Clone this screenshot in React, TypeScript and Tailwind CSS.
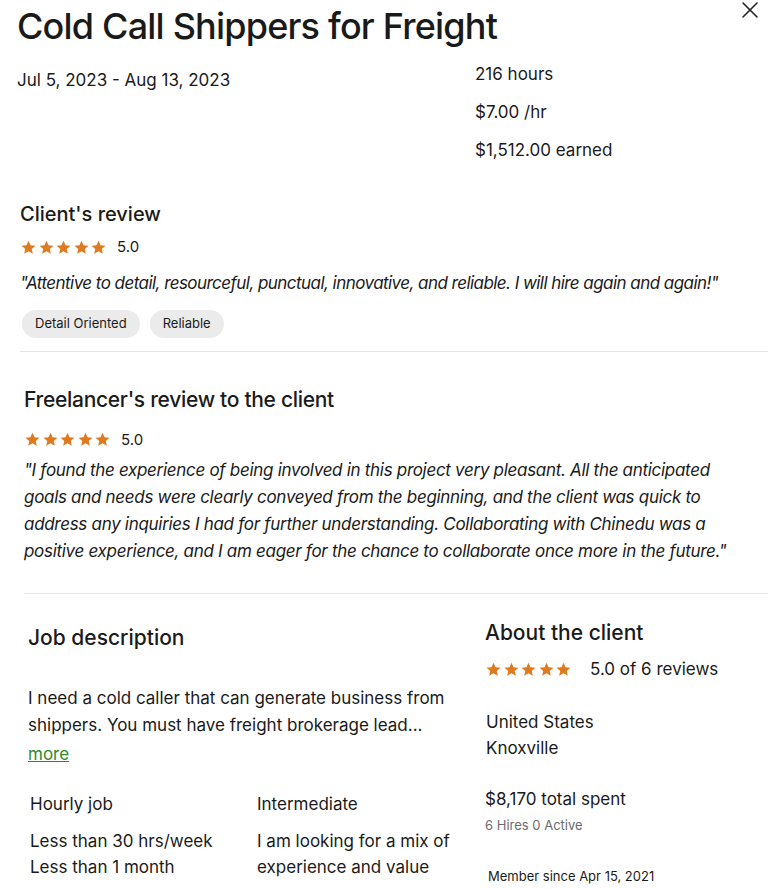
import { X } from "lucide-react";

const font = { fontFamily: "Inter, 'Liberation Sans', sans-serif" };

function Stars({ size = 17 }: { size?: number }) {
  return (
    <div className="flex items-center gap-[0.5px]">
      {[0, 1, 2, 3, 4].map((i) => (
        <svg key={i} width={size} height={size} viewBox="0 0 24 24">
          <path
            d="M12 2.5l2.9 6.3 6.9.7-5.2 4.6 1.5 6.8L12 17.4l-6.1 3.5 1.5-6.8-5.2-4.6 6.9-.7z"
            fill="#e07a1f"
          />
        </svg>
      ))}
    </div>
  );
}

export default function App() {
  return (
    <div
      className="relative w-[768px] h-[889px] overflow-hidden bg-white text-[#1a1a1a]"
      style={font}
    >
      <button className="absolute right-[4px] top-[-4px] text-[#222]">
        <X size={28} strokeWidth={1.3} />
      </button>

      {/* Header */}
      <div className="pl-[17px] pt-[2px]">
        <h1 className="text-[36px] leading-[48px] font-medium tracking-[-0.8px]">
          Cold Call Shippers for Freight
        </h1>
        <div className="flex mt-[12px]">
          <div className="w-[458px] text-[17px] pt-[6px]">Jul 5, 2023 - Aug 13, 2023</div>
          <div className="flex flex-col gap-[14px] text-[17px] leading-[24px]">
            <span>216 hours</span>
            <span>$7.00 /hr</span>
            <span>$1,512.00 earned</span>
          </div>
        </div>
      </div>

      {/* Client's review */}
      <div className="ml-[20px] pt-[38px] pb-[13px] border-b border-[#e4e4e4]">
        <h2 className="text-[20px] leading-[28px] font-medium">Client's review</h2>
        <div className="flex items-center gap-[10px] mt-[8px]">
          <Stars />
          <span className="text-[15px]">5.0</span>
        </div>
        <p className="italic text-[17px] mt-[12px] tracking-[-0.55px] whitespace-nowrap">
          "Attentive to detail, resourceful, punctual, innovative, and reliable. I will hire again and again!"
        </p>
        <div className="flex gap-[10px] mt-[14px] pl-[2px]">
          <span className="bg-[#ebebeb] rounded-full px-[13px] py-[4px] text-[13px]">Detail Oriented</span>
          <span className="bg-[#ebebeb] rounded-full px-[13px] py-[4px] text-[13px]">Reliable</span>
        </div>
      </div>

      {/* Freelancer's review */}
      <div className="ml-[24px] pt-[34px] pb-[28px] border-b border-[#e4e4e4]">
        <h2 className="text-[21px] leading-[28px] font-medium tracking-[-0.3px]">
          Freelancer's review to the client
        </h2>
        <div className="flex items-center gap-[10px] mt-[15px]">
          <Stars />
          <span className="text-[15px]">5.0</span>
        </div>
        <p className="italic text-[17px] leading-[27px] mt-[6px] w-[712px] tracking-[-0.3px]">
          "I found the experience of being involved in this project very pleasant. All the anticipated goals and needs were clearly conveyed from the beginning, and the client was quick to address any inquiries I had for further understanding. Collaborating with Chinedu was a positive experience, and I am eager for the chance to collaborate once more in the future."
        </p>
      </div>

      {/* Bottom */}
      <div className="flex pt-[25px]">
        <div className="w-[485px] pl-[28px]">
          <h2 className="text-[21px] leading-[28px] font-medium mt-[5px]">Job description</h2>
          <p className="text-[17px] leading-[27px] mt-[33px] w-[420px]">
            I need a cold caller that can generate business from shippers. You must have freight brokerage lead...
          </p>
          <a className="text-[17px] leading-[27px] text-[#2f8a2f] underline block mt-[2px]">more</a>
          <div className="grid grid-cols-[229px_1fr] mt-[23px] text-[17px] leading-[26px]">
            <div className="pl-[2px]">
              <div>Hourly job</div>
              <div className="mt-[11px]">Less than 30 hrs/week</div>
              <div>Less than 1 month</div>
            </div>
            <div>
              <div>Intermediate</div>
              <div className="mt-[11px]">I am looking for a mix of</div>
              <div>experience and value</div>
            </div>
          </div>
        </div>
        <div className="flex-1">
          <h2 className="text-[21px] leading-[28px] font-medium">About the client</h2>
          <div className="flex items-center gap-[18px] mt-[10px]">
            <Stars />
            <span className="text-[17px]">5.0 of 6 reviews</span>
          </div>
          <div className="text-[17px] leading-[26px] mt-[26px] pl-[1px]">
            <div>United States</div>
            <div>Knoxville</div>
          </div>
          <div className="text-[17px] leading-[26px] mt-[25px]">$8,170 total spent</div>
          <div className="text-[13px] text-[#6b6b6b] mt-[4px]">6 Hires 0 Active</div>
          <div className="text-[13px] mt-[32px] pl-[3px]">Member since Apr 15, 2021</div>
        </div>
      </div>
    </div>
  );
}
